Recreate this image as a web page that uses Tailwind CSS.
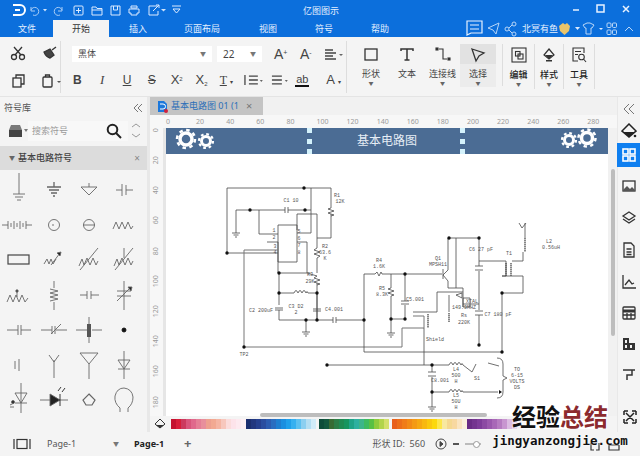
<!DOCTYPE html>
<html lang="zh">
<head>
	<meta charset="UTF-8" />
	<title>亿图图示</title>
	<script src="https://cdn.jsdelivr.net/npm/@tailwindcss/browser@4"></script>
</head>
<body class="relative w-[640px] h-[456px] overflow-hidden bg-[#f4f4f4] text-[#333] font-['Noto_Sans','Noto_Sans_CJK_SC',sans-serif]">

	<!-- title bar + tabs -->
	<header class="h-[37px] bg-[#0c6fdc] text-[#e4f0ff] text-[9px] leading-none">
		<div class="h-[20px] flex items-center relative">
			<svg class="ml-[12px] w-[176px] h-[20px]" viewBox="12 0 176 20" fill="none" stroke="#dcebff" stroke-width="1">
				<path d="M13 5H20A4.500 4.500 0 0 1 20 15H13M15 10H20" stroke="#fff" stroke-width="2"/>
				<path d="M31 7L31 11H35M31 10A4 4 0 1 1 33 15" stroke="#a9cdf6"/>
				<path d="M43 9H47L45 11.500Z" fill="#cfe3fb" stroke="none"/>
				<path d="M62 7V11H58M62 10A4 4 0 1 0 60 15" stroke="#a9cdf6"/>
				<rect x="74" y="6" width="9" height="9" rx="1"/><path d="M78.500 8V13M76 10.500H81"/>
				<path d="M92 7H96L97 8.500H102V15H92ZM92 10H102"/>
				<path d="M111 6H120V15H111ZM113.500 6V10H117.500V6"/>
				<path d="M131 8H137V6H131ZM129 9H139V13H137V15H131V13H129Z"/>
				<path d="M157 6H149V15H158V11M153 11L159 5M156 5H159V8"/>
				<path d="M161 9H166L163.500 11.500Z" fill="#cfe3fb" stroke="none"/>
				<path d="M172 6H181M173 9H180L176.500 13Z"/>
			</svg>
			<span class="absolute left-[303px] top-[6px]">亿图图示</span>
			<svg class="absolute left-[570px] top-0 w-[65px] h-[20px]" viewBox="570 0 65 20" fill="none" stroke="#e8f2ff" stroke-width="1.500">
				<path d="M573 10H579"/>
				<rect x="597" y="5" width="7" height="7"/>
				<path d="M623 6L629 12M629 6L623 12"/>
			</svg>
		</div>
		<nav class="h-[17px] flex items-center relative">
			<span class="w-[53px] pl-[18px]">文件</span>
			<span class="w-[56px] h-[17px] bg-[#f4f4f4] text-[#333] flex items-center justify-center">开始</span>
			<span class="ml-[20px] w-[34px]">插入</span>
			<span class="ml-[21px] w-[52px]">页面布局</span>
			<span class="ml-[23px] w-[30px]">视图</span>
			<span class="ml-[26px] w-[30px]">符号</span>
			<span class="ml-[26px] w-[30px]">帮助</span>
			<svg class="ml-[64px] w-[22px] h-[17px]" viewBox="0 0 22 17" fill="none" stroke="#e8f2ff" stroke-width="1">
				<path d="M2 1H17V13H6L2 15ZM5 5H14M5 9H14" stroke-width="1.200"/>
			</svg>
			<svg class="w-[45px] h-[17px]" viewBox="0 0 45 17" fill="none" stroke="#b8d6f8" stroke-width="1">
				<path d="M1 8L12 3L9 14L6 10Z"/>
				<circle cx="20" cy="9" r="2"/><circle cx="27" cy="4" r="2"/><circle cx="27" cy="14" r="2"/><path d="M22 8L25 5M22 10L25 13"/>
			</svg>
			<span class="w-[36px] -ml-[10px]">北冥有鱼</span>
			<svg class="w-[78px] h-[17px]" viewBox="0 0 78 17" fill="none" stroke="#b8d6f8" stroke-width="1">
				<path d="M1 6L5 3L7 4.500L9 3L12 6L11 11L6.500 15L2 11Z" fill="#e9c46a" stroke="none"/>
				<path d="M17 7H22L19.500 10Z" fill="#dcebff" stroke="none"/>
				<path d="M25 5L29 3H32L36 5L34 8H33V14H28V8H27Z"/>
				<path d="M41 8H45L43 10Z" fill="#dcebff" stroke="none"/>
				<rect x="49" y="3" width="4" height="4.500" rx="1"/><rect x="54.500" y="3" width="4" height="4.500" rx="1"/><rect x="49" y="10" width="4" height="4.500" rx="1"/><rect x="54.500" y="10" width="4" height="4.500" rx="1"/>
				<path d="M67 11L71 7L75 11"/>
			</svg>
		</nav>
	</header>

	<!-- ribbon -->
	<section class="h-[60px] flex bg-[#f4f4f4] border-b border-[#e4e4e4] text-[#444]">
		<!-- clipboard -->
		<div class="w-[61px] h-[52px] mt-[4px] border-r border-[#dddddd] grid grid-cols-2 grid-rows-2 pl-[6px]">
			<svg class="w-[24px] h-[24px]" viewBox="0 0 24 24" fill="none" stroke="#333" stroke-width="1.300"><circle cx="8" cy="16" r="2.500"/><circle cx="16" cy="16" r="2.500"/><path d="M9 14L16 6M15 14L8 6"/></svg>
			<svg class="w-[24px] h-[24px] ml-[4px]" viewBox="0 0 24 24" fill="none" stroke="#333" stroke-width="1.300"><path d="M7 11L13 8L17 14L13 17Q9 16 7 11Z" fill="#444"/><path d="M15 9L19 6"/></svg>
			<svg class="w-[24px] h-[24px] mt-[2px]" viewBox="0 0 24 24" fill="none" stroke="#333" stroke-width="1.300"><rect x="7" y="9" width="8" height="9"/><path d="M10 9V6H18V15H15"/></svg>
			<svg class="w-[30px] h-[24px] mt-[2px] ml-[3px]" viewBox="0 0 30 24" fill="none" stroke="#333" stroke-width="1.300"><rect x="7" y="8" width="9" height="10" rx="1"/><path d="M9.500 8V6H13.500V8"/><path d="M21 12H25L23 14Z" fill="#555" stroke="none"/></svg>
		</div>
		<!-- font -->
		<div class="w-[286px] h-[52px] mt-[4px] border-r border-[#dddddd] pl-[4px]">
			<div class="h-[26px] flex items-center pl-[7px] text-[9px]">
				<div class="w-[140px] h-[16px] bg-white flex items-center justify-between px-[6px]"><span>黑体</span><span class="text-[6px] text-[#777]">▼</span></div>
				<div class="ml-[5px] w-[45px] h-[16px] bg-white flex items-center justify-between px-[6px] text-[10px]"><span>22</span><span class="text-[6px] text-[#777]">▼</span></div>
				<span class="ml-[12px] w-[26px] text-[14px] font-['Liberation_Sans']">A<sup class="text-[7px]">+</sup></span>
				<span class="w-[24px] text-[14px] font-['Liberation_Sans']">A<sup class="text-[7px]">-</sup></span>
				<svg class="w-[20px] h-[14px]" viewBox="0 0 20 14" stroke="#444" stroke-width="1.300"><path d="M1 3H9M1 6H12M1 9H9M1 12H12"/><path d="M15 7H19L17 9Z" fill="#666" stroke="none"/></svg>
			</div>
			<div class="h-[26px] flex items-center text-[12px] font-['Liberation_Sans'] [&>*]:w-[25px] [&>*]:text-center">
				<span class="font-bold">B</span>
				<span class="italic font-['Liberation_Serif'] text-[13px]">I</span>
				<span class="underline">U</span>
				<span class="line-through">S</span>
				<span class="text-[13px]">X<sup class="text-[6px]">2</sup></span>
				<span class="text-[13px]">X<sub class="text-[6px]">2</sub></span>
				<span class="text-[12px] font-['Liberation_Serif']"><span class="underline">T</span> <span class="text-[6px]">▾</span></span>
				<svg class="h-[14px]" viewBox="0 0 25 14" fill="none" stroke="#444" stroke-width="1.300"><path d="M10 3H19M10 7H19M10 11H19M6 2V12"/><path d="M21 7H24L22.500 9Z" fill="#666" stroke="none"/></svg>
				<svg class="h-[14px]" viewBox="0 0 25 14" fill="none" stroke="#444" stroke-width="1.300"><path d="M8 3H18M8 7H18M8 11H18"/><path d="M21 7H24L22.500 9Z" fill="#666" stroke="none"/></svg>
				<span class="text-[11px] leading-none border-b-2 border-[#111] !w-[14px] ml-[7px] mr-[4px]">ab</span>
				<span class="text-[13px] ml-[8px]">A <span class="text-[6px]">▾</span></span>
			</div>
		</div>
		<!-- big tools -->
		<div class="flex text-[9px] leading-none pl-[6px] [&>div]:flex [&>div]:flex-col [&>div]:items-center [&>div]:h-[45px] [&>div]:mt-[7px]">
			<div class="w-[36px]">
				<svg class="w-[20px] h-[20px] mt-[1px]" viewBox="0 0 20 20" fill="none" stroke="#333" stroke-width="1.300"><rect x="4" y="4" width="12" height="11"/></svg>
				<span class="mt-[4px]">形状</span><span class="text-[5px] mt-[3px] text-[#666]">▼</span>
			</div>
			<div class="w-[36px]">
				<svg class="w-[20px] h-[20px] mt-[1px]" viewBox="0 0 20 20" fill="none" stroke="#333" stroke-width="1.500"><path d="M4 6V4H16V6M10 4V15M7.500 15H12.500"/></svg>
				<span class="mt-[4px]">文本</span>
			</div>
			<div class="w-[35px]">
				<svg class="w-[20px] h-[20px] mt-[1px]" viewBox="0 0 20 20" fill="none" stroke="#333" stroke-width="1.100"><path d="M6 4H10V14H14"/><rect x="3" y="3" width="2" height="2" fill="#333"/><rect x="15" y="13" width="2" height="2" fill="#333"/></svg>
				<span class="mt-[4px]">连接线</span><span class="text-[5px] mt-[3px] text-[#666]">▼</span>
			</div>
			<div class="w-[36px] !h-[43px] bg-[#ececec] relative">
				<div class="w-full h-[20px] bg-[#e2e2e2] flex justify-center pt-[1px]">
					<svg class="w-[20px] h-[20px]" viewBox="0 0 20 20" fill="none" stroke="#333" stroke-width="1.300"><path d="M4 4L16 8L11 11L8 16Z"/></svg>
				</div>
				<span class="mt-[5px]">选择</span><span class="text-[5px] mt-[3px] text-[#666]">▼</span>
			</div>
			<div class="w-[7px] !h-[42px] border-r border-[#dddddd]"></div>
			<div class="w-[31px] text-[#222] font-medium">
				<svg class="w-[20px] h-[20px] mt-[1px]" viewBox="0 0 20 20" fill="none" stroke="#333" stroke-width="1.100"><rect x="3" y="3" width="14" height="14"/><rect x="6.500" y="6.500" width="4.500" height="4.500"/><rect x="9" y="9" width="5" height="5"/></svg>
				<span class="mt-[5px]">编辑</span><span class="text-[5px] mt-[3px] text-[#666]">▼</span>
			</div>
			<div class="w-[30px] text-[#222] font-medium border-x border-[#dddddd]">
				<svg class="w-[20px] h-[20px] mt-[1px]" viewBox="0 0 20 20" fill="#333"><path d="M10 4L15 10L10 14L5 10Z" fill="none" stroke="#333" stroke-width="1.200"/><path d="M6 10H14L10 14Z"/><rect x="7" y="15" width="6" height="1.500"/></svg>
				<span class="mt-[5px]">样式</span><span class="text-[5px] mt-[3px] text-[#666]">▼</span>
			</div>
			<div class="w-[31px] text-[#222] font-medium border-r border-[#dddddd]">
				<svg class="w-[20px] h-[20px] mt-[1px]" viewBox="0 0 20 20" fill="none" stroke="#333" stroke-width="1.100"><path d="M9 16H4V3H15V8M6 6.500H12M6 9.500H9"/><circle cx="12.500" cy="12" r="2.800"/><path d="M14.500 14L17 17"/></svg>
				<span class="mt-[5px]">工具</span><span class="text-[5px] mt-[3px] text-[#666]">▼</span>
			</div>
		</div>
	</section>

	<main class="h-[335px] flex">
		<!-- symbol library -->
		<aside class="w-[147px] overflow-hidden text-[#555]">
			<div class="h-[21px] flex items-center justify-between pl-[4px] pr-[4px] text-[9px]">
				<span>符号库</span>
				<svg class="w-[10px] h-[10px]" viewBox="0 0 10 10" fill="none" stroke="#777"><path d="M5 1L1 5L5 9M9 1L5 5L9 9"/></svg>
			</div>
			<div class="h-[25px] flex items-center pl-[9px]">
				<svg class="w-[19px] h-[14px]" viewBox="0 0 19 14" fill="#444"><path d="M2 1H11L13 6H0Z" opacity=".7"/><rect y="6" width="13" height="7"/><path d="M15 5H19L17 8Z" fill="#777"/></svg>
				<div class="w-[100px] h-[20px] bg-[#f8f8f8] flex items-center justify-between pl-[4px] pr-[6px] text-[9px] text-[#9a9a9a]">
					<span>搜索符号</span>
					<svg class="w-[16px] h-[16px]" viewBox="0 0 16 16" fill="none" stroke="#222" stroke-width="2"><circle cx="6.500" cy="6.500" r="4.800"/><path d="M10 10L15 15"/></svg>
				</div>
				<svg class="ml-[3px] w-[10px] h-[18px]" viewBox="0 0 10 18" fill="none" stroke="#999"><path d="M1 5L5 2L9 5M1 12L5 15L9 12"/></svg>
			</div>
			<div class="mt-[3px] h-[24px] bg-[#dcdcdc] flex items-center pl-[9px] pr-[7px] text-[9px] text-[#444]">
				<span class="text-[6px] text-[#666] mr-[3px]">▼</span>
				<span class="flex-1 font-medium">基本电路符号</span>
				<span class="text-[10px] text-[#888]">×</span>
			</div>
			<div id="symbols" class="pt-[3px] pl-[2px] grid grid-cols-[repeat(4,35px)] auto-rows-[35px]"></div>
		</aside>
		<div class="w-[3px] bg-[#e8e8e8]"></div>

		<!-- editor -->
		<div class="w-[467px] flex flex-col">
			<div class="h-[18px] bg-[#f1f1f1] flex">
				<div class="w-[113px] bg-[#c4c4c4] flex items-center pl-[7px] text-[9px] text-[#2a6fb8]">
					<svg class="w-[11px] h-[13px] mr-[3px]" viewBox="0 0 11 13"><path d="M1 1H7L10 4V12H1Z" fill="#1c78dc"/><path d="M3 4H6A2.500 2.500 0 0 1 6 9H3" fill="none" stroke="#fff"/><circle cx="9" cy="11" r="2" fill="#d0213c"/></svg>
					<span class="flex-1 whitespace-nowrap overflow-hidden">基本电路图 01 (1</span>
					<span class="w-[17px] text-[#777] text-[11px]">×</span>
				</div>
			</div>
			<div id="rulerTop" class="h-[13px] bg-[#f7f7f7] flex pl-[13px] text-[7px] leading-[13px] text-[#999]"></div>
			<div class="h-[288px] flex">
				<div class="w-[13px] bg-[#f7f7f7] overflow-hidden"><div id="rulerLeft" class="-mt-[13px] text-[7px] text-[#999]"></div></div>
				<div class="w-[3px] bg-[#e6e6e6]"></div>
				<div class="w-[442px] bg-white overflow-hidden flex flex-col">
					<div class="relative h-[26px] shrink-0 bg-[#4b6c94] flex items-center justify-between px-[8px] text-[12px] text-[#e6edf5]">
						<svg class="w-[42px] h-[26px]" viewBox="174 128 42 26" fill="none" stroke="#fff">
							<circle cx="186" cy="139" r="6" stroke-width="3.500"/><circle cx="186" cy="139" r="9" stroke-width="2.500" stroke-dasharray="3.500 3.550"/>
							<circle cx="206" cy="141" r="4.500" stroke-width="3"/><circle cx="206" cy="141" r="7" stroke-width="2.200" stroke-dasharray="2.750 2.750"/>
						</svg>
						<span>基本电路图</span>
						<svg class="w-[42px] h-[26px]" viewBox="558 128 42 26" fill="none" stroke="#fff">
							<circle cx="569" cy="140" r="4.500" stroke-width="3"/><circle cx="569" cy="140" r="7" stroke-width="2.200" stroke-dasharray="2.750 2.750"/>
							<circle cx="587" cy="138" r="5.500" stroke-width="3.500"/><circle cx="587" cy="138" r="8.500" stroke-width="2.500" stroke-dasharray="3.340 3.340"/>
						</svg>
						<div class="absolute left-[141px] top-0 h-[26px] w-[5px] flex flex-col justify-between"><i class="h-[5px] bg-[#d4f2fc]"></i><i class="h-[5px] bg-[#d4f2fc]"></i><i class="h-[5px] bg-[#d4f2fc]"></i></div>
						<div class="absolute left-[294px] top-0 h-[26px] w-[5px] flex flex-col justify-between"><i class="h-[5px] bg-[#d4f2fc]"></i><i class="h-[5px] bg-[#d4f2fc]"></i><i class="h-[5px] bg-[#d4f2fc]"></i></div>
					</div>
					<!-- diagram, viewBox uses page coordinates -->
					<svg class="w-[442px] h-[262px] shrink-0" viewBox="166 154 442 262" fill="none" stroke="#4a4a4a" stroke-width=".8">
						<path d="M227 188H331V208M331 214V238H317M227 188V253H278M311 188V233H297"/>
						<path d="M236 233V210H285M288 210H311M259 210V234H278"/>
						<path d="M278 225H297V262H278ZM297 230V214H317V248M317 258V273M267 242H278V273H307M297 242H307V273L317 276M317 283V320"/>
						<path d="M279 273V305M279 310V320H333M336 320H364M306 320V332M279 293H294M308 293H317M317 293V320"/>
						<path d="M244 347V250H278M244 347H402V328H424V316H413" stroke="#777" stroke-width="1"/>
						<path d="M364 320V352H502M364 274V320M364 274H375M382 274H442M391 274V288M391 296V333M405 274V301M405 305V319M391 319H405"/>
						<path d="M443 269V279M443 275L448 270V238H479M443 275L448 281V288H463M456 238V288M437 292H463M437 292V312H413M449 295V312M463 288V307M463 304H479M479 238V266M479 271V310M479 315V345"/>
						<path d="M479 261H506M506 261V276H502M502 276H523V293H502V352M512 261H523V252M525 238V223M519 223L522 228L526 223"/>
						<path d="M327 365H449M463 365L472 372L476 364M424 328V365M432 365V372M432 377V407M432 392H449M463 392H498M488 363L499 366"/>
						<path d="M428 314V328M506 263V276M511 263V276M525 238V252M449 313V322" stroke-dasharray="1.500 .5" stroke-width="1.300"/>
						<!-- resistors and coils -->
						<path d="M331 208L328 209L334 211L328 213L334 215L331 216M317 248L314 250L320 252L314 254L320 256L317 258M317 276L314 278L320 280L314 282L320 284L317 285M375 274L377 272L379 276L381 272L382 274M391 288L388 289L394 291L388 293L394 295L391 296"/>
						<path d="M294 293Q296 288 298 293Q300 288 302 293Q304 288 306 293Q307 290 308 293M449 365Q451 360 453 365Q455 360 457 365Q459 360 461 365Q462 362 463 365M449 392Q451 387 453 392Q455 387 457 392Q459 387 461 392Q462 389 463 392"/>
						<!-- capacitors -->
						<path d="M285 207V213M288 207V213M275 308H283M275 310H283M313 309H321M313 311H321M333 317V323M336 317V323M401 301H409M401 304H409M475 266H483M475 270H483M475 311H483M475 315H483M428 372H436M428 376H436"/>
						<path d="M232 233H240M233.500 235H238.500M235 237H237M302 332H310M303.500 334H308.500M305 336H307M387 333H395M388.500 335H393.500M390 337H392M428 407H436M429.500 409H434.500M431 411H433"/>
						<path d="M497 358Q503 358 503 364V376L507 378L503 380V392Q503 398 497 398"/>
						<path d="M456 295L462 293V298ZM463 298H470V307H463Z"/>
						<g fill="#111" stroke="none">
							<circle cx="304" cy="188" r="1.700"/><circle cx="250" cy="210" r="1.700"/><circle cx="305" cy="210" r="1.700"/><circle cx="227" cy="253" r="1.700"/><circle cx="279" cy="273" r="1.700"/><circle cx="279" cy="293" r="1.700"/><circle cx="317" cy="293" r="1.700"/><circle cx="306" cy="320" r="1.700"/><circle cx="317" cy="320" r="1.700"/><circle cx="364" cy="320" r="1.700"/><circle cx="244" cy="347" r="1.700"/><circle cx="405" cy="274" r="1.700"/><circle cx="391" cy="319" r="1.700"/><circle cx="405" cy="319" r="1.700"/><circle cx="449" cy="238" r="1.700"/><circle cx="479" cy="238" r="1.700"/><circle cx="479" cy="345" r="1.700"/><circle cx="502" cy="293" r="1.700"/><circle cx="502" cy="352" r="1.700"/><circle cx="327" cy="365" r="1.700"/><circle cx="432" cy="365" r="1.700"/><circle cx="432" cy="392" r="1.700"/>
							<path d="M499 390L499 394L502 392Z"/>
						</g>
						<g fill="#555" stroke="none" font-size="5" font-family="Liberation Mono" text-anchor="middle">
							<text x="337" y="197">R1</text><text x="340" y="203">12K</text>
							<text x="291" y="202">C1 10</text>
							<text x="274" y="232">1</text><text x="274" y="239">2</text><text x="275" y="248">3</text><text x="275" y="254">4</text>
							<text x="299" y="233">5</text><text x="299" y="240">6</text><text x="299" y="247">7</text><text x="299" y="254">8</text>
							<text x="325" y="248">R2</text><text x="325" y="254">63.6</text><text x="325" y="260">K</text>
							<text x="310" y="276">R3</text><text x="310" y="283">29K</text>
							<text x="261" y="312">C2 200uF</text>
							<text x="296" y="308">C3 D2</text><text x="296" y="314">2</text>
							<text x="334" y="311">C4.001</text>
							<text x="379" y="262">R4</text><text x="379" y="268">1.6K</text>
							<text x="382" y="290">R5</text><text x="382" y="296">8.3K</text>
							<text x="415" y="301">C5.001</text>
							<text x="438" y="260">Q1</text><text x="438" y="266">MPSH11</text>
							<text x="481" y="251">C6 27 pF</text>
							<text x="509" y="255">T1</text>
							<text x="549" y="243">L2</text><text x="551" y="249">0.56uH</text>
							<text x="472" y="303">XTAL</text><text x="464" y="309">149.9MHZ</text>
							<text x="464" y="317">Rs</text><text x="464" y="324">220K</text>
							<text x="498" y="316">C7 180 pF</text>
							<text x="435" y="341">Shield</text>
							<text x="244" y="356">TP2</text>
							<text x="456" y="371">L4</text><text x="456" y="377">500</text><text x="456" y="383">H</text>
							<text x="477" y="380">S1</text>
							<text x="440" y="382">C8.001</text>
							<text x="456" y="397">L5</text><text x="456" y="403">50U</text><text x="456" y="409">H</text>
							<text x="517" y="371">TO</text><text x="517" y="377">6-15</text><text x="517" y="383">VOLTS</text><text x="517" y="389">DS</text>
						</g>
					</svg>
				</div>
				<div class="w-[9px] bg-[#f1f1f1] pt-[41px] pl-[3px]"><div class="w-[4px] h-[167px] bg-[#bdbdbd] rounded-full"></div></div>
			</div>
			<div class="h-[16px] flex items-start relative">
				<svg class="ml-[4px] mt-[2px] w-[12px] h-[12px]" viewBox="0 0 12 12" fill="#333"><path d="M6 1L11 6L6 10L1 6Z" fill="none" stroke="#333"/><path d="M2 7H10L6 10Z"/></svg>
				<div id="swatches" class="ml-[5px] mt-[3px] h-[11px] flex [&>div:nth-child(3)]:ml-[3px] [&>div:nth-child(4)]:ml-[3px]"></div>
				<div class="absolute left-[110px] -top-[3px] w-[227px] h-[4px] bg-[#bdbdbd] rounded-full"></div>
			</div>
		</div>

		<!-- right dock -->
		<aside class="w-[23px] flex flex-col items-center bg-[#f4f4f4] border-l border-[#e8e8e8] relative">
			<svg class="mt-[6px] w-[12px] h-[12px] shrink-0" viewBox="0 0 12 12" fill="none" stroke="#777"><path d="M6 1L1 6L6 11M11 1L6 6L11 11"/></svg>
			<svg class="mt-[8px] w-[16px] h-[16px] shrink-0" viewBox="0 0 16 16" fill="#222"><path d="M8 1L15 8L8 14L1 8Z" fill="none" stroke="#222" stroke-width="1.500"/><path d="M2 9H14L8 14Z"/><circle cx="14" cy="13" r="1.300"/></svg>
			<div class="mt-[4px] w-[24px] h-[24px] shrink-0 bg-[#0f7ff0] flex items-center justify-center">
				<svg class="w-[14px] h-[14px]" viewBox="0 0 14 14" fill="none" stroke="#fff" stroke-width="1.600"><rect x="1" y="1" width="5" height="5"/><rect x="8" y="1" width="5" height="5"/><rect x="1" y="8" width="5" height="5"/><rect x="8" y="8" width="5" height="5"/></svg>
			</div>
			<svg class="mt-[11px] w-[16px] h-[16px] shrink-0" viewBox="0 0 16 16" fill="none" stroke="#333" stroke-width="1.300"><rect x="2" y="3" width="12" height="10"/><path d="M2 12L6 8L9 11L11 9L14 12L14 13H2Z" fill="#555" stroke="none"/></svg>
			<svg class="mt-[16px] w-[16px] h-[16px] shrink-0" viewBox="0 0 16 16" fill="none" stroke="#333" stroke-width="1.300"><path d="M8 2L14 6L8 10L2 6ZM2 9L8 13L14 9"/></svg>
			<svg class="mt-[16px] w-[16px] h-[16px] shrink-0" viewBox="0 0 16 16" fill="none" stroke="#333" stroke-width="1.300"><path d="M3 1H10L13 4V15H3ZM5.500 7H10.500M5.500 10H10.500M5.500 12.500H10.500"/></svg>
			<svg class="mt-[16px] w-[16px] h-[16px] shrink-0" viewBox="0 0 16 16" fill="none" stroke="#333" stroke-width="1.300"><path d="M2 1V14H15M4 11L8 6L11 10L13 9"/></svg>
			<svg class="mt-[15px] w-[16px] h-[16px] shrink-0" viewBox="0 0 16 16" fill="none" stroke="#333" stroke-width="1.300"><rect x="2" y="2" width="12" height="12" rx="1"/><path d="M2 6H14" stroke-width="3"/><path d="M2 10H14M6 8V14M10 8V14"/></svg>
			<svg class="mt-[15px] w-[16px] h-[16px] shrink-0" viewBox="0 0 16 16" fill="#333"><path d="M2 2H8V7H14V14H2ZM4 4V7H6V4ZM4 9V12H6V9ZM9 9V12H11V9Z" fill-rule="evenodd"/></svg>
			<svg class="mt-[15px] w-[16px] h-[16px] shrink-0" viewBox="0 0 16 16" fill="none" stroke="#333" stroke-width="1.500"><path d="M2 3H14M11 3V8H6V13"/></svg>
			<svg class="absolute left-[5px] top-[313px] w-[14px] h-[14px]" viewBox="0 0 14 14" fill="none" stroke="#222" stroke-width="1.500"><path d="M1 1H5M1 1V5M13 1H9M13 1V5M1 13H5M1 13V9M13 13H9M13 13V9M3 3L11 11M11 3L3 11"/></svg>
		</aside>
	</main>

	<!-- status bar -->
	<footer class="h-[24px] flex items-center bg-[#f4f4f4] text-[9px] text-[#555] relative">
		<svg class="ml-[13px] w-[18px] h-[12px]" viewBox="0 0 18 12" fill="none" stroke="#333" stroke-width="1.200"><rect x="4" y="1.500" width="10" height="9"/><path d="M1 1V11M17 1V11"/></svg>
		<span class="ml-[16px] w-[66px]">Page-1</span>
		<span class="text-[6px] text-[#777]">▼</span>
		<span class="ml-[15px] font-bold text-[#222]">Page-1</span>
		<span class="ml-[20px] text-[13px] font-bold text-[#666]">+</span>
		<span class="ml-[181px]">形状 ID:&nbsp; 560</span>
		<svg class="ml-[10px] w-[12px] h-[12px]" viewBox="0 0 12 12" fill="none" stroke="#444"><circle cx="6" cy="6" r="5"/><path d="M5 3.500L8 6L5 8.500Z" fill="#444"/></svg>
		<span class="ml-[6px] w-[6px] h-[2px] bg-[#555]"></span>
		<span class="ml-[6px] w-[16px] h-[2px] bg-[#bbbbbb]"></span>
		<span class="-ml-[8px] w-[7px] h-[7px] rounded-full border border-[#999] bg-white"></span>
		<svg class="absolute left-[588px] top-[10px] w-[36px] h-[10px]" viewBox="0 0 36 10" fill="none" stroke="#333" stroke-width="1.200"><path d="M3 1V8H6M11 1V8H8M21 3V8H31V3M21 3H31"/></svg>
	</footer>

	<!-- watermark -->
	<div class="absolute left-[490px] top-[404px] w-[140px] flex flex-col items-center font-bold leading-none [text-shadow:0_0_2px_#fff]">
		<div class="text-[24px] h-[28px] font-['Noto_Sans_CJK_SC',sans-serif] text-[#111]">经验<span class="text-[#8c2a2e]">总结</span></div>
		<div class="text-[12.500px] mt-[3px] font-['DejaVu_Sans_Mono',monospace] text-[#111]">jingyanzongjie.com</div>
	</div>

	<script>
		// symbol library, one svg per cell
		const symbols = [
			'<path d="M17 0V21M11 21H23M13 24H21M15 27H19"/>',
			'<path d="M17 9V14M10 14H24M12 17H22M14 20H20M16 23H18" stroke-width="1.300"/>',
			'<path d="M9 14H25L17 22Z"/><path d="M17 10V14"/>',
			'<path d="M9 17H15M15 11V23M19 12V22M19 17H26"/>',
			'<path d="M0 17H6M6 13V21M9 15V19M12 13V21M15 15V19M18 13V21M21 15V19M24 13V21M24 17H30"/>',
			'<circle cx="17" cy="17" r="5.500"/><path d="M15 17H17"/>',
			'<circle cx="17" cy="17" r="5.500"/><path d="M11 17H23"/>',
			'<path d="M6 21L9 14L12 21L15 14L18 21L21 14L24 21L26 18"/>',
			'<rect x="6" y="12" width="21" height="9" stroke="#444" stroke-width="1.200"/>',
			'<path d="M7 21L10 16L12 21L14 16L16 21L19 16M14 22L23 10" /><path d="M20 10L24 9L23 13Z" fill="#222"/>',
			'<path d="M7 23L10 16L12 22L15 15L18 22L21 15L24 22L26 18M8 27L26 5"/>',
			'<path d="M7 23L10 16L12 22L15 15L18 22L21 15L24 22L26 18M8 27L26 5M17 5V15"/>',
			'<path d="M5 24L8 17L11 24L14 17L17 24L20 17L23 24L26 20M15 19V14"/><circle cx="15" cy="13" r="1.200" fill="#333"/>',
			'<path d="M17 3V10M17 24V32M13 11L21 13L13 15L21 17L13 19L21 21L13 23"/>',
			'<path d="M8 17H15M15 13V21M19 13V21M19 17H27"/>',
			'<path d="M17 3V32M10 13H24M10 18H24M10 23L24 9"/><path d="M21 9L25 9L24 13Z" fill="#222"/>',
			'<path d="M5 17H16M16 12V22M19 12V22M19 17H29"/>',
			'<path d="M4 17H15M19 17H30M15 13V21M18 13V21M14 21L24 11"/>',
			'<path d="M4 17H15M20 17H30M17 4V30" /><rect x="15" y="11" width="4" height="13" fill="#555" stroke="none"/>',
			'<circle cx="17" cy="17" r="2" fill="#111" stroke="#111"/>',
			'<path d="M15 13V21M19 11V23" transform="translate(-2 0)"/>',
			'<path d="M17 12V30M12 7L17 14L22 7"/>',
			'<path d="M17 16V31M8 5H26L17 16Z" fill="none"/>',
			'<path d="M17 3V31M11 12H23L17 21ZM11 21H23"/>',
			'<path d="M19 0V30M13 10H25L19 20ZM13 20H25M12 20L8 22M8 24L12 24" /><circle cx="11" cy="19" r="1.500" fill="#222"/>',
			'<path d="M3 17H31"/><path d="M13 11V23L23 17Z" fill="#222"/><path d="M23 11V23M21 8L24 4M25 9L28 5" stroke="#222"/>',
			'<path d="M17 11L23 17L20 22H14L11 17Z" stroke-width="1.200"/>',
			'<path d="M13 25Q7 20 8 13Q10 5 17 5Q25 6 26 14Q26 21 21 25M13 25V29M21 25V29"/>',
			'<circle cx="17" cy="26" r="5.500"/><circle cx="17" cy="26" r="2"/>',
			'<path d="M10 29H24" stroke-width="1.500"/>',
			'<path d="M13 16V24L19 29"/>',
			'<circle cx="18" cy="24" r="3"/><path d="M20 27L22 30"/>'
		];
		document.getElementById("symbols").innerHTML = symbols.map((s) =>
			`<svg class="w-[34px] h-[34px]" viewBox="0 0 34 34" fill="none" stroke="#666" stroke-width=".9">${s}</svg>`
		).join("");

		// rulers
		const rulerTop = document.getElementById("rulerTop");
		for (let i = 0; i <= 280; i += 20) {
			rulerTop.innerHTML += `<span class="w-[30.100px] shrink-0 pl-[3px]">${i}</span>`;
		}
		const rulerLeft = document.getElementById("rulerLeft");
		for (let i = 0; i <= 180; i += 20) {
			rulerLeft.innerHTML += `<div class="h-[30.200px] flex items-center justify-center"><span class="-rotate-90">${i}</span></div>`;
		}

		// colour strip
		const groups = [
			["#c4122f","#d81e3a","#cc3a5e","#d9567c","#e0698c","#e57f96","#e88f9c","#eea08f","#f2a992","#f5b5a3","#f7c7bd","#fbdcdc","#fde3ea","#fdeaf0","#fff0f4"],
			["#1d2f6f","#22377f","#26408f","#2a4d9f","#2c5cb0","#2a6dc0","#1f7fd0","#1b8fe0","#20a0ea","#36b0f0","#5cc0f0","#8ccff0","#b4def2","#d2ecf8"],
			["#0d4d3a","#12583f","#376b33","#2c7d46","#1f8a52","#17955f","#1fa388","#2eb0a0","#3cb58a","#3dbb60","#58c044","#8ecb3c","#b2d44a","#d4e06a"],
			["#e8601c","#ec6e1a","#f07c18","#f28a16","#f49a14","#f6a812","#f8b810","#fac80e","#fcd80c","#fde64a","#f8e8a0","#f5d890","#f8d8a0","#fae4c0","#fcf0dc"],
			["#6a2c85","#74348f","#7e3c99","#8c4aa3","#9a58ad","#a868b7","#b67cc1","#c896d0","#dcbce2","#e8d4ec","#f4f0f6","#f8f8f8","#fafafa","#ffffff","#ffffff","#ffffff","#ffffff","#ffffff","#ffffff","#ffffff","#ffffff","#ffffff","#ffffff","#ffffff","#ffffff","#ffffff","#ffffff","#ffffff"]
		];
		document.getElementById("swatches").innerHTML = groups.map((g) =>
			`<div class="flex">${g.map((c) => `<i class="block w-[5px] h-[10px]" style="background:${c}"></i>`).join("")}</div>`
		).join("");
	</script>
</body>
</html>
